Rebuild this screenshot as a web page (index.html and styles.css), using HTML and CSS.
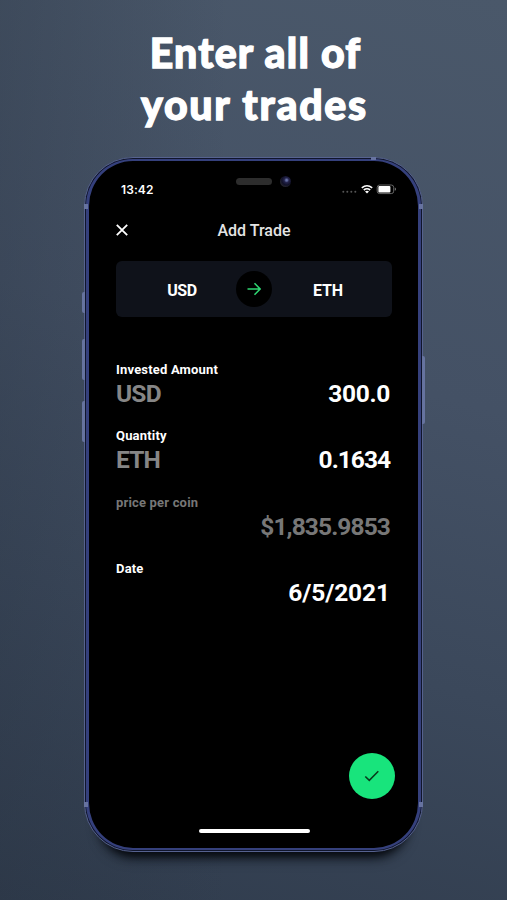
FILE: index.html
```html
<!DOCTYPE html>
<html lang="en">
<head>
    <meta charset="UTF-8">
    <meta name="viewport" content="width=device-width, initial-scale=1.0">
    <title>Add Trade</title>
    <link rel="stylesheet" href="styles.css">
</head>
<body>

<h1 class="headline"><span class="line-one">Enter all of</span><br><span class="line-two">your trades</span></h1>

<div class="phone">
    <!-- Side buttons and antenna bands -->
    <span class="side-button mute"></span>
    <span class="side-button volume-up"></span>
    <span class="side-button volume-down"></span>
    <span class="side-button power"></span>
    <span class="band band-top"></span>
    <span class="band band-left"></span>
    <span class="band band-right"></span>
    <span class="band band-left low"></span>
    <span class="band band-right low"></span>
    <div class="speaker"></div>
    <div class="camera"></div>

    <div class="screen">
        <div class="status-bar">
            <span class="time">13:42</span>
            <svg class="status-icons" width="56" height="12" viewBox="0 0 56 12">
                <g fill="#555">
                    <circle cx="2.3" cy="8.7" r="1"/>
                    <circle cx="6.3" cy="8.7" r="1"/>
                    <circle cx="10.3" cy="8.7" r="1"/>
                    <circle cx="14.3" cy="8.7" r="1"/>
                </g>
                <g fill="none" stroke="#fff" stroke-width="1.6">
                    <path d="M20.8 4.9Q26 .6 31.2 4.9"/>
                    <path d="M22.8 7Q26 4.5 29.2 7"/>
                </g>
                <path d="M24 8.4Q26 7 28 8.4L26 10.4z" fill="#fff"/>
                <rect x="36.2" y="2" width="16.5" height="8.6" rx="2.4" fill="none" stroke="#666"/>
                <rect x="37.4" y="3" width="12" height="6.6" rx="1" fill="#fff"/>
                <path d="M53.8 4.6v3.2q1.2-.4 1.2-1.6t-1.2-1.6z" fill="#777"/>
            </svg>
        </div>

        <div class="nav">
            <svg class="close" width="12" height="12" viewBox="0 0 12 12">
                <path d="M.8 .8l10.4 10.4M11.2 .8L.8 11.2" fill="none" stroke="#fff" stroke-width="1.8"/>
            </svg>
            <span class="title">Add Trade</span>
        </div>

        <div class="pair">
            <span class="coin from">USD</span>
            <span class="swap">
                <svg width="14" height="14" viewBox="0 0 14 14">
                    <path d="M.5 7H13M7.5 1.3L13.1 7l-5.6 5.7" fill="none" stroke="#2fd873" stroke-width="1.5"/>
                </svg>
            </span>
            <span class="coin">ETH</span>
        </div>

        <div class="fields">
            <div class="field">
                <div class="label">Invested Amount</div>
                <div class="row"><span class="unit">USD</span><span class="value amount">300.0</span></div>
            </div>
            <div class="field">
                <div class="label">Quantity</div>
                <div class="row"><span class="unit">ETH</span><span class="value quantity">0.1634</span></div>
            </div>
            <div class="field muted">
                <div class="label">price per coin</div>
                <div class="row"><span class="value price">$1,835.9853</span></div>
            </div>
            <div class="field">
                <div class="label">Date</div>
                <div class="row"><span class="value date">6/5/2021</span></div>
            </div>
        </div>

        <div class="confirm">
            <svg width="16" height="12" viewBox="0 0 16 12">
                <path d="M1.3 6.5L5.3 10.3L14.3 1.3" fill="none" stroke="#083b1d" stroke-width="1.6"/>
            </svg>
        </div>
        <div class="home-bar"></div>
    </div>
</div>

</body>
</html>
```
FILE: styles.css
```css
* {
    box-sizing: border-box;
}
body {
    margin: 0;
    height: 900px;
    overflow: hidden;
    font-family: Roboto, "Liberation Sans", sans-serif;
    color: #fff;
    background:
        linear-gradient(90deg, rgba(38, 48, 62, 0.3), rgba(38, 48, 62, 0) 45%),
        linear-gradient(195deg, #4a586a 0%, #445165 40%, #3b485b 68%, #303c4d 100%);
}
.headline {
    margin: 0;
    padding-top: 27px;
    height: 157px;
    font-family: Lato, sans-serif;
    font-size: 41px;
    font-weight: 900;
    line-height: 52px;
    text-align: center;
    -webkit-text-stroke: 1.3px #fff;
}
.line-one {
    margin-left: 4px;
    letter-spacing: 1.2px;
}
.line-two {
    margin-left: 2px;
    letter-spacing: 1.75px;
}
.phone {
    position: relative;
    width: 339px;
    height: 695px;
    margin-left: 84px;
    padding: 1px;
    border: 1px solid #56628f;
    border-radius: 49px;
    background: #10152b;
    box-shadow: 0 18px 10px -15px #05080d, 0 22px 16px -20px #05080d;
}
.screen {
    display: flex;
    flex-direction: column;
    height: 100%;
    padding: 0 26px 0 27px;
    border: solid #35407c;
    border-width: 2px 3px;
    border-radius: 47px;
    background: #000;
}
.side-button {
    position: absolute;
    left: -3px;
    width: 3px;
    background: #66739f;
    border-radius: 2px 0 0 2px;
}
.mute {
    top: 134px;
    height: 21px;
}
.volume-up {
    top: 181px;
    height: 41px;
}
.volume-down {
    top: 243px;
    height: 41px;
}
.power {
    left: auto;
    right: -3px;
    top: 198px;
    height: 68px;
    border-radius: 0 2px 2px 0;
}
.band {
    position: absolute;
    width: 4px;
    height: 5px;
    background: #6773a0;
}
.band-top {
    top: -1px;
    left: 286px;
    width: 5px;
    height: 3px;
}
.band-left {
    top: 46px;
    left: -1px;
}
.band-right {
    top: 46px;
    right: -1px;
}
.band.low {
    top: 644px;
}
.speaker {
    position: absolute;
    top: 20px;
    left: 151px;
    width: 36px;
    height: 7px;
    border-radius: 4px;
    background: #2d2d2d;
}
.camera {
    position: absolute;
    top: 18px;
    left: 195px;
    width: 11px;
    height: 11px;
    border-radius: 50%;
    background: radial-gradient(circle at 60% 38%, #6670a5 0 8%, #23234a 25%, #111129 50%, #22222c 70%);
}
.status-bar {
    display: flex;
    align-items: center;
    justify-content: space-between;
    height: 18px;
    margin: 19px -5px 0 5px;
}
.time {
    font-family: Inter, sans-serif;
    font-size: 12px;
    font-weight: 600;
    letter-spacing: 0.1px;
}
.nav {
    display: flex;
    align-items: center;
    height: 24px;
    margin-top: 20px;
}
.title {
    flex: 1;
    margin-right: 12px;
    padding-top: 1px;
    font-size: 16px;
    font-weight: 500;
    text-align: center;
    color: #e4e4e4;
}
.pair {
    display: grid;
    grid-template-columns: 1fr 36px 1fr;
    align-items: center;
    flex: none;
    height: 56px;
    margin-top: 19px;
    padding: 0 12px;
    border-radius: 6px;
    background: #0f121a;
}
.coin {
    padding: 2px 0 0 4px;
    font-size: 16px;
    font-weight: 700;
    letter-spacing: -0.2px;
    text-align: center;
}
.from {
    padding-left: 0;
    letter-spacing: -0.4px;
}
.swap {
    display: flex;
    align-items: center;
    justify-content: center;
    height: 36px;
    border-radius: 50%;
    background: #000;
}
.fields {
    margin: 44px 2px 0 0;
}
.field {
    height: 66.3px;
}
.label {
    height: 18px;
    font-size: 13px;
    font-weight: 700;
    line-height: 18px;
    letter-spacing: 0.18px;
}
.row {
    display: flex;
    height: 30px;
    font-size: 24.5px;
    font-weight: 700;
    line-height: 30px;
}
.unit {
    color: #868686;
    letter-spacing: -0.8px;
}
.value {
    margin-left: auto;
}
.amount {
    letter-spacing: -0.3px;
}
.quantity {
    letter-spacing: -1px;
}
.price {
    letter-spacing: -0.9px;
}
.date {
    letter-spacing: -0.1px;
}
.muted {
    color: #777;
}
.confirm {
    display: flex;
    align-items: center;
    justify-content: center;
    align-self: flex-end;
    flex: none;
    width: 46px;
    height: 46px;
    margin: auto -3px 30px 0;
    border-radius: 50%;
    background: #18e47c;
}
.home-bar {
    flex: none;
    align-self: center;
    width: 111px;
    height: 4px;
    margin-bottom: 15px;
    border-radius: 2px;
    background: #fff;
}
```
